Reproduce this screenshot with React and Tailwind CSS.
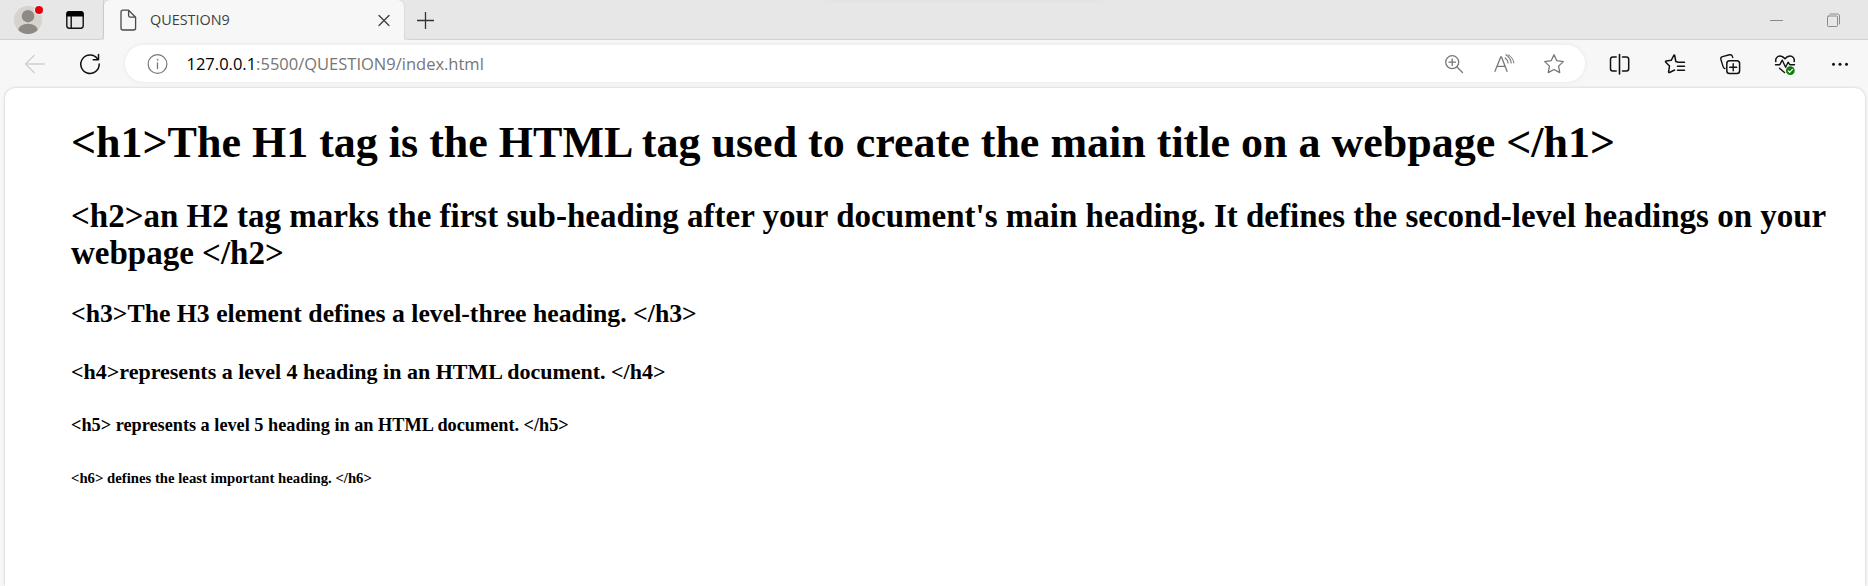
function Icon({ children, className = "", w = 24 }) {
  return (
    <svg
      width={w}
      height="24"
      viewBox={`0 0 ${w} 24`}
      fill="none"
      stroke="currentColor"
      strokeWidth="1.3"
      strokeLinecap="round"
      strokeLinejoin="round"
      className={`shrink-0 ${className}`}
    >
      {children}
    </svg>
  );
}

function Cell({ children, className = "" }) {
  return (
    <button className={`flex h-9 w-[55px] shrink-0 items-center justify-center text-[#111] ${className}`}>
      {children}
    </button>
  );
}

function TabBar() {
  return (
    <header className="relative flex h-10 shrink-0 bg-[#e7e7e7]">
      <div className="absolute -top-[10px] left-[826px] h-[9px] w-[276px] rounded-lg shadow-[0_0_7px_rgba(0,0,0,0.05)]" />
      <div className="flex w-[104px] shrink-0 rounded-br-[5px] border-r border-b border-[#d2d2d2]">
        <svg width="40" height="39" viewBox="0 0 40 39" className="ml-2 shrink-0">
          <defs>
            <clipPath id="face">
              <circle cx="20" cy="20" r="14" />
            </clipPath>
          </defs>
          <circle cx="20" cy="20" r="14" fill="#d6d3ce" />
          <g clipPath="url(#face)" fill="#8d8985">
            <circle cx="20" cy="16.2" r="6.2" />
            <ellipse cx="20" cy="31" rx="10" ry="7.3" />
          </g>
          <circle cx="31" cy="10" r="5" fill="#efefef" />
          <circle cx="31" cy="10" r="4" fill="#e3000b" />
        </svg>
        <svg width="20" height="39" viewBox="0 0 20 39" className="ml-[17px] shrink-0" fill="none">
          <rect x="1.8" y="11.8" width="16.4" height="16.4" rx="2.4" stroke="#111" strokeWidth="1.4" />
          <path d="M1.5 16.5V14a2.7 2.7 0 0 1 2.7-2.7h11.6a2.7 2.7 0 0 1 2.7 2.7v2.5z" fill="#000" />
          <path d="M6.2 16v12" stroke="#111" strokeWidth="1.4" />
        </svg>
      </div>
      <div className="flex h-10 w-[300px] shrink-0 items-center rounded-t-[6px] bg-[#f7f7f7] pl-3 text-[#3f3f3f] shadow-[0_0_2px_rgba(0,0,0,0.15)] [clip-path:inset(0_-3px_0_-3px)]">
        <Icon className="text-[#4a4a4a]">
          <path d="M7 2.200h5.600l7 7V20a2 2 0 0 1-2 2H7a2 2 0 0 1-2-2V4.200a2 2 0 0 1 2-2z M12.600 2.400v5a1.800 1.800 0 0 0 1.800 1.800h5" />
        </Icon>
        <span className="ml-[10px] text-[14.4px] leading-5 whitespace-nowrap font-['Open_Sans',sans-serif]">QUESTION9</span>
        <Icon className="mr-[8px] ml-auto">
          <path d="m7 7.500 10 10M17 7.500l-10 10" />
        </Icon>
      </div>
      <div className="flex flex-1 items-center rounded-bl-[5px] border-b border-[#d2d2d2] text-[#333]">
        <Icon className="ml-[9px]">
          <path d="M4 12.500h17M12.500 4v17" strokeLinecap="butt" />
        </Icon>
        <div className="ml-auto flex gap-8 pr-[22px] text-[#8b8b8b]">
          <Icon>
            <path d="M4 12.500h13" strokeLinecap="butt" strokeWidth="1" />
          </Icon>
          <Icon>
            <rect x="5.500" y="8" width="10" height="10.500" rx="1" strokeWidth="1" />
            <path d="M8 6h7.500a2 2 0 0 1 2 2v8" strokeWidth="1" />
          </Icon>
        </div>
      </div>
    </header>
  );
}

function Toolbar() {
  return (
    <div className="flex h-12 shrink-0 items-center pb-px pl-[7px]">
      <Cell className="text-[#cfcfcf]!">
        <Icon>
          <path d="M21.500 12H2.500M11 3.500 2.500 12l8.500 8.500" />
        </Icon>
      </Cell>
      <Cell>
        <Icon>
          <path d="M19.700 7.200A9.200 9.200 0 1 0 21.200 12" strokeWidth="1.500" />
          <path d="M20.500 2.500v5.200h-5.300" strokeWidth="1.500" />
        </Icon>
      </Cell>
      <div className="ml-2 flex h-[37px] w-[1460px] shrink-0 items-center rounded-full bg-white pr-[6px] pl-5 text-[#777] shadow-[0_0_5px_rgba(0,0,0,0.07)]">
        <Icon w={26}>
          <circle cx="12.500" cy="12" r="9.400" strokeWidth="1.200" />
          <path d="M12.500 11v5.500" />
          <circle cx="12.500" cy="7.800" r="0.500" fill="currentColor" strokeWidth="0.600" />
        </Icon>
        <span className="ml-[15.500px] text-[16.5px] leading-6 whitespace-nowrap text-[#767676] font-['Open_Sans',sans-serif]">
          <span className="text-black">127.0.0.1</span>:5500/QUESTION9/index.html
        </span>
        <div className="ml-auto flex">
          <span className="flex w-[50px] justify-center">
            <Icon>
              <circle cx="10.200" cy="10.200" r="6.500" />
              <path d="m15 15 5.500 5.500M10.200 7v6.400M7 10.200h6.400" />
            </Icon>
          </span>
          <span className="flex w-[50px] justify-center">
            <Icon>
              <path d="m3 19.300 5.800-14.500h.6L15 19.300M5 14.300h8.200" />
              <path d="M13.200 6c1.600 1.200 2.600 2.800 2.900 5M13.900 2.800c3 1.800 4.900 4.700 5.300 8.200" strokeWidth="1.200" />
              <path d="M16.200 2.800c3 1.600 5.200 4.400 5.700 8.200" strokeWidth="1" />
            </Icon>
          </span>
          <span className="flex w-[50px] justify-center">
            <Icon>
              <path d="m12 2.800 2.800 5.900 6.500.9-4.700 4.500 1.100 6.500L12 17.500l-5.700 3.100 1.100-6.500-4.700-4.500 6.500-.9z" />
            </Icon>
          </span>
        </div>
      </div>
      <div className="ml-[7px] flex">
        <Cell>
          <Icon>
            <path d="M11.500 2.500v19.500" strokeWidth="1.600" />
            <path d="M8.200 5H4.700a2.200 2.200 0 0 0-2.200 2.200v9.600A2.200 2.200 0 0 0 4.700 19h3.500M14.500 5h4a2.200 2.200 0 0 1 2.200 2.200v9.600A2.200 2.200 0 0 1 18.500 19h-4" strokeWidth="1.500" />
          </Icon>
        </Cell>
        <Cell>
          <Icon>
            <path d="M21.500 10.200h-6.300l-2.400-.700L11.700 3.500q-.5-.8-1 0L8.200 8.300l-5 .8q-1.200.3-.4 1.100l3.700 3.900-.9 5.800q0 1 1 .6l5-2.500" strokeWidth="1.500" />
            <path d="M14.500 14.300h7M14.500 18.300h7" strokeWidth="1.500" />
          </Icon>
        </Cell>
        <Cell>
          <Icon>
            <rect x="8.800" y="8.800" width="12.800" height="12.800" rx="2.800" strokeWidth="1.500" />
            <path d="M15.200 11.700v7M11.700 15.200h7M6.800 16.500c-1-.3-1.500-1-1.700-1.900L2.900 7.500c-.4-1.500.2-2.500 1.600-2.900l7-1.800c1.600-.4 2.500.2 2.900 1.600l.4 1.200" strokeWidth="1.400" />
          </Icon>
        </Cell>
        <Cell>
          <Icon>
            <path d="M2.800 9.500C2.200 6.500 4.200 4 7 4c2.100 0 3.700 1.100 5 2.800C13.300 5.100 14.900 4 17 4c2.800 0 4.800 2.500 4.200 5.500" strokeWidth="1.500" />
            <path d="M2.500 12.700h4.300l2.500-4.500 3.300 7 2.500-5 1.700 2.500h4.700M6.500 16.200l5 4.300" strokeWidth="1.400" />
            <circle cx="17.300" cy="18.700" r="4.400" fill="#107c10" stroke="none" />
            <path d="m15.200 18.800 1.500 1.500 2.700-3" stroke="#fff" strokeWidth="1.200" />
          </Icon>
        </Cell>
        <Cell>
          <Icon>
            <g fill="currentColor" stroke="none">
              <circle cx="5.500" cy="12.300" r="1.500" />
              <circle cx="12" cy="12.300" r="1.500" />
              <circle cx="18.500" cy="12.300" r="1.500" />
            </g>
          </Icon>
        </Cell>
      </div>
    </div>
  );
}

export default function App() {
  return (
    <div className="flex h-[586px] w-[1868px] flex-col overflow-hidden bg-[#f7f7f7]">
      <TabBar />
      <Toolbar />
      <main className="mr-[3px] ml-[5px] flex-1 overflow-hidden rounded-t-[10px] bg-white pt-[30px] pl-[66px] font-bold text-black shadow-[0_0_3px_rgba(0,0,0,0.2)] font-['Liberation_Serif',serif]">
        <h1 className="text-[44px] leading-[50px]">
          {"<h1>The H1 tag is the HTML tag used to create the main title on a webpage </h1>"}
        </h1>
        <h2 className="mt-[30px] w-[1780px] text-[33px] leading-[37px]">
          {"<h2>an H2 tag marks the first sub-heading after your document's main heading. It defines the second-level headings on your webpage </h2>"}
        </h2>
        <h3 className="mt-[27px] text-[25.74px] leading-[30px]">
          {"<h3>The H3 element defines a level-three heading. </h3>"}
        </h3>
        <h4 className="mt-[30px] text-[22px] leading-[25px]">
          {"<h4>represents a level 4 heading in an HTML document. </h4>"}
        </h4>
        <h5 className="mt-[31px] text-[18.26px] leading-[21px]">
          {"<h5> represents a level 5 heading in an HTML document. </h5>"}
        </h5>
        <h6 className="mt-[34px] text-[14.74px] leading-[17px]">
          {"<h6> defines the least important heading. </h6>"}
        </h6>
      </main>
    </div>
  );
}
